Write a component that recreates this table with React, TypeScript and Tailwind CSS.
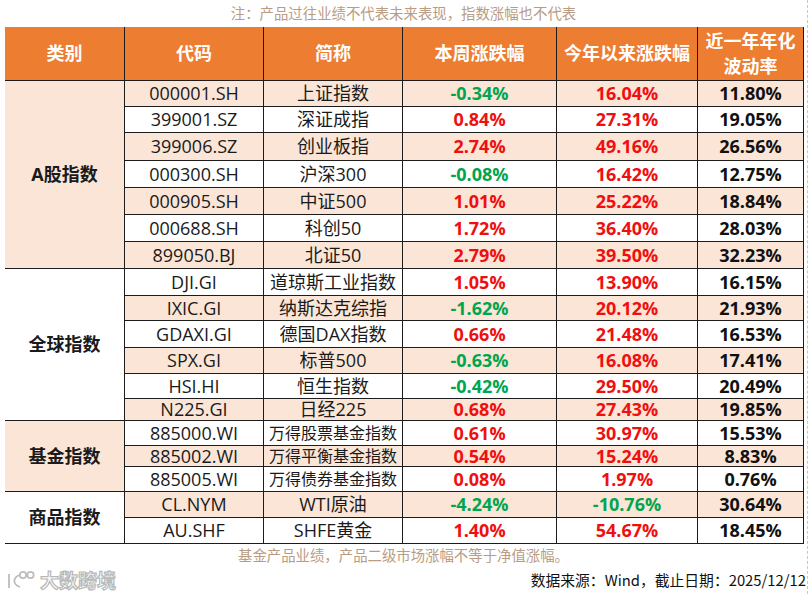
import React from 'react';

type Row = {
  code: string;
  name: string;
  week: string;
  ytd: string;
  vol: string;
  h: string;
  small?: boolean;
};

const groups: { name: string; rows: Row[] }[] = [
  {
    name: 'A股指数',
    rows: [
      { code: '000001.SH', name: '上证指数', week: '-0.34%', ytd: '16.04%', vol: '11.80%', h: 'h-[26px]' },
      { code: '399001.SZ', name: '深证成指', week: '0.84%', ytd: '27.31%', vol: '19.05%', h: 'h-[26px]' },
      { code: '399006.SZ', name: '创业板指', week: '2.74%', ytd: '49.16%', vol: '26.56%', h: 'h-[28px]' },
      { code: '000300.SH', name: '沪深300', week: '-0.08%', ytd: '16.42%', vol: '12.75%', h: 'h-[27px]' },
      { code: '000905.SH', name: '中证500', week: '1.01%', ytd: '25.22%', vol: '18.84%', h: 'h-[27px]' },
      { code: '000688.SH', name: '科创50', week: '1.72%', ytd: '36.40%', vol: '28.03%', h: 'h-[27px]' },
      { code: '899050.BJ', name: '北证50', week: '2.79%', ytd: '39.50%', vol: '32.23%', h: 'h-[27px]' },
    ],
  },
  {
    name: '全球指数',
    rows: [
      { code: 'DJI.GI', name: '道琼斯工业指数', week: '1.05%', ytd: '13.90%', vol: '16.15%', h: 'h-[27px]' },
      { code: 'IXIC.GI', name: '纳斯达克综指', week: '-1.62%', ytd: '20.12%', vol: '21.93%', h: 'h-[25px]' },
      { code: 'GDAXI.GI', name: '德国DAX指数', week: '0.66%', ytd: '21.48%', vol: '16.53%', h: 'h-[27px]' },
      { code: 'SPX.GI', name: '标普500', week: '-0.63%', ytd: '16.08%', vol: '17.41%', h: 'h-[26px]' },
      { code: 'HSI.HI', name: '恒生指数', week: '-0.42%', ytd: '29.50%', vol: '20.49%', h: 'h-[25px]' },
      { code: 'N225.GI', name: '日经225', week: '0.68%', ytd: '27.43%', vol: '19.85%', h: 'h-[22px]' },
    ],
  },
  {
    name: '基金指数',
    rows: [
      { code: '885000.WI', name: '万得股票基金指数', week: '0.61%', ytd: '30.97%', vol: '15.53%', h: 'h-[25px]', small: true },
      { code: '885002.WI', name: '万得平衡基金指数', week: '0.54%', ytd: '15.24%', vol: '8.83%', h: 'h-[21px]', small: true },
      { code: '885005.WI', name: '万得债券基金指数', week: '0.08%', ytd: '1.97%', vol: '0.76%', h: 'h-[25px]', small: true },
    ],
  },
  {
    name: '商品指数',
    rows: [
      { code: 'CL.NYM', name: 'WTI原油', week: '-4.24%', ytd: '-10.76%', vol: '30.64%', h: 'h-[26px]' },
      { code: 'AU.SHF', name: 'SHFE黄金', week: '1.40%', ytd: '54.67%', vol: '18.45%', h: 'h-[26px]' },
    ],
  },
];

const cell = 'flex items-center justify-center border-r border-b border-[#1c1c1c]';
const peach = 'bg-[#fbe5d6]';

const signColor = (v: string) => (v.startsWith('-') ? 'text-[#00a54f]' : 'text-[#f00f0f]');

// watermark mark, bottom left
const Logo = () => (
  <svg width="30" height="22" viewBox="0 0 30 22" fill="none" stroke="#bdbdbd" strokeWidth="1.8">
    <path d="M3 5 V19" />
    <path d="M14 6 C7 8 6 15 14 18" />
    <circle cx="17" cy="6" r="3.2" fill="#fff" />
    <circle cx="24.5" cy="6" r="3.2" fill="#fff" />
  </svg>
);

export default function App() {
  let idx = 0;
  return (
    <div className="w-[808px] h-[594px] bg-white border-r border-dashed border-[#c8c8c8] font-['Open_Sans','Noto_Sans_CJK_SC',sans-serif] text-[#1a1a1a] overflow-hidden">
      <div className="h-[27px] flex items-center justify-center text-[14.4px] text-[#b99c83]">
        注：产品过往业绩不代表未来表现，指数涨幅也不代表
      </div>

      <div className="ml-[5px] w-[799px]">
        {/* header */}
        <div className="flex h-[54px] bg-[#ed7d31] text-white font-bold text-[18px] leading-[25px]">
          <div className={`${cell} w-[120px]`}>类别</div>
          <div className={`${cell} w-[139px]`}>代码</div>
          <div className={`${cell} w-[139px]`}>简称</div>
          <div className={`${cell} w-[154px]`}>本周涨跌幅</div>
          <div className={`${cell} w-[141px]`}>今年以来涨跌幅</div>
          <div className={`${cell} w-[106px] flex-col`}>
            <span>近一年年化</span>
            <span>波动率</span>
          </div>
        </div>

        {groups.map((g, gi) => (
          <div key={g.name} className="flex">
            <div
              className={`${cell} w-[120px] font-bold text-[18px] ${gi % 2 === 0 ? peach : 'bg-white'}`}
            >
              {g.name}
            </div>
            <div className="flex flex-col">
              {g.rows.map((r) => {
                const bg = idx++ % 2 === 0 ? peach : 'bg-white';
                return (
                  <div key={r.code} className={`flex ${r.h} ${bg} text-[18px]`}>
                    <div className={`${cell} w-[139px]`}>{r.code}</div>
                    <div className={`${cell} w-[139px] whitespace-nowrap ${r.small ? 'text-[16px]' : ''}`}>
                      {r.name}
                    </div>
                    <div className={`${cell} w-[154px] font-bold ${signColor(r.week)}`}>{r.week}</div>
                    <div className={`${cell} w-[141px] font-bold ${signColor(r.ytd)}`}>{r.ytd}</div>
                    <div className={`${cell} w-[106px] font-bold text-[#111]`}>{r.vol}</div>
                  </div>
                );
              })}
            </div>
          </div>
        ))}
      </div>

      <div className="h-[24px] flex items-center justify-center text-[14.4px] text-[#b99c83]">
        基金产品业绩，产品二级市场涨幅不等于净值涨幅。
      </div>
      <div className="h-[24px] flex items-center justify-between pl-[6px] pr-[1px]">
        <div className="flex items-center gap-[4px]">
          <Logo />
          <span className="text-[19px] font-bold text-white [-webkit-text-stroke:1.2px_#b8b8b8] font-['Noto_Sans_CJK_SC',sans-serif]">
            大数跨境
          </span>
        </div>
        <div className="text-[14.8px] text-[#111] font-['Noto_Sans_CJK_SC',sans-serif]">
          数据来源：Wind，截止日期：2025/12/12
        </div>
      </div>
    </div>
  );
}
